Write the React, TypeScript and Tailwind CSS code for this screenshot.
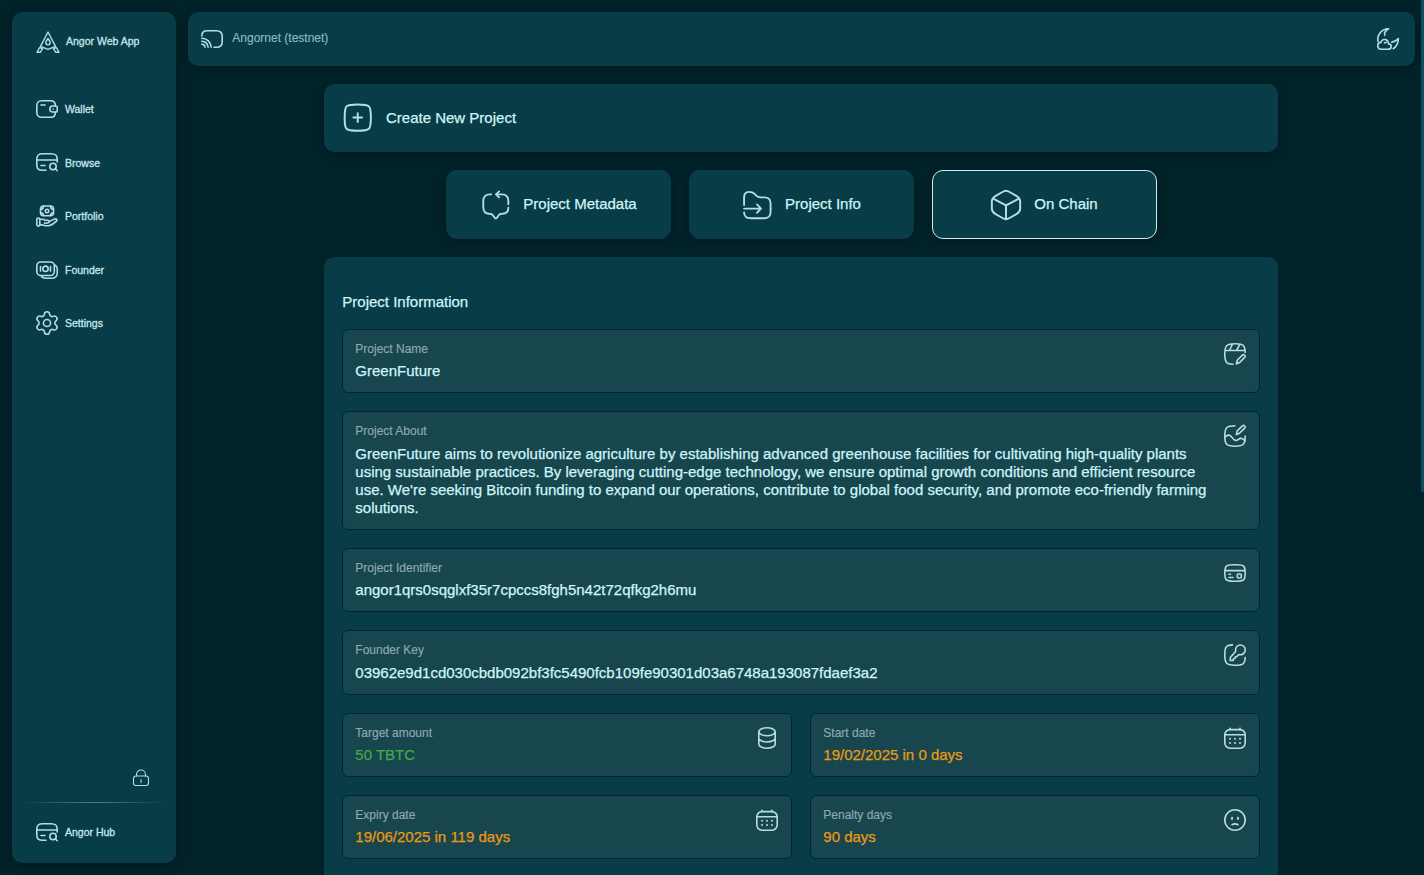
import type { ReactNode } from "react";

function Icon({ size = 24, stroke = 1.6, children }: { size?: number; stroke?: number; children: ReactNode }) {
  return (
    <svg
      width={size}
      height={size}
      viewBox="0 0 24 24"
      fill="none"
      stroke="currentColor"
      strokeWidth={stroke}
      strokeLinecap="round"
      strokeLinejoin="round"
      className="shrink-0 text-[#b5dde3]"
    >
      {children}
    </svg>
  );
}

const LogoIcon = () => (
  <Icon stroke={1.4}>
    <path d="M12 2 4.500 16.400 12 19.300l7.500-2.900L12 2Z" />
    <path d="M12 8.500c1.500 2 2.200 2.800 2.200 4.100a2.200 2.200 0 0 1-4.400 0c0-1.300.7-2.100 2.200-4.100Z" />
    <path d="M3.600 17.500 1 22.300h3.200l2.400-3.600-3-1.200ZM20.400 17.500l2.600 4.800h-3.200l-2.400-3.600 3-1.200Z" />
  </Icon>
);

const WalletIcon = () => (
  <Icon>
    <path d="M20.300 9V8.500c0-3.300-1.200-4.700-4.500-4.700H7C3.200 3.800 1.800 5 1.800 9v6c0 4 1.400 5.300 5.200 5.300h8.800c3.300 0 4.500-1.400 4.500-4.700V15" />
    <path d="M21 9h-3.200a3 3 0 0 0 0 6H21c.7 0 1.200-.4 1.200-1.100v-3.800C22.200 9.400 21.700 9 21 9Z" />
    <path d="M6 8h4M18.200 12h.01" />
  </Icon>
);

const CardSearchIcon = () => (
  <Icon>
    <path d="M11 20.300H8C3.500 20.300 1.800 19 1.800 15V9.200C1.800 5.200 3.500 3.800 8 3.800h8c4.500 0 6.200 1.400 6.200 5.400V12" />
    <path d="M2 10h20M6 15.500h4" />
    <circle cx="18" cy="16.500" r="3.200" />
    <path d="m20.300 18.800 1.900 1.900" />
  </Icon>
);

const HandMoneyIcon = () => (
  <Icon>
    <rect x="5.500" y="2" width="13" height="9.800" rx="3" />
    <circle cx="12" cy="7" r="1.700" />
    <path d="M5.700 5.200c1.600 0 2.700-1 2.900-2.900M18.300 5.200c-1.600 0-2.700-1-2.900-2.900M5.700 8.800c1.500 0 2.500.9 2.900 2.700M18.300 8.800c-1.500 0-2.500.9-2.900 2.700" />
    <path d="M3.200 14c1.200 0 1.600.5 1.600 1.500v5c0 1-.4 1.600-1.600 1.600-1 0-1.400-.5-1.400-1.600v-5c0-1 .4-1.500 1.400-1.500Z" />
    <path d="M5 15.300h2.200c1.200 0 1.900.3 2.800 1h2.600c2.200 0 2.300 2.400.1 2.600l-3.200.2M14.200 17.600l5-2.500c1.800-.8 3.600.5 2.200 2-2.500 2.600-4.800 4.100-7.500 4.600-3.500.6-5.500-.9-8.900-1.100" />
  </Icon>
);

const CashIcon = () => (
  <Icon>
    <rect x="1.800" y="4" width="17.500" height="13.500" rx="4" />
    <circle cx="10.500" cy="10.800" r="2.700" />
    <path d="M5.500 8.500v4.600M15.500 8.500v4.600M20.300 7.200c1.400.8 2 2 2 4.200v3c0 4.200-1.700 5.800-5.800 5.800H11c-2.300 0-3.700-.4-4.600-1.700" />
  </Icon>
);

const GearIcon = () => (
  <Icon>
    <g transform="translate(12 12) scale(1.120) translate(-12 -12)" strokeWidth="1.400">
      <path d="M9.671 4.136a2.340 2.340 0 0 1 4.659 0 2.340 2.340 0 0 0 3.319 1.915 2.340 2.340 0 0 1 2.330 4.033 2.340 2.340 0 0 0 0 3.831 2.340 2.340 0 0 1-2.330 4.033 2.340 2.340 0 0 0-3.319 1.915 2.340 2.340 0 0 1-4.659 0 2.340 2.340 0 0 0-3.320-1.915 2.340 2.340 0 0 1-2.330-4.033 2.340 2.340 0 0 0 0-3.831A2.340 2.340 0 0 1 6.350 6.051a2.340 2.340 0 0 0 3.319-1.915" />
      <circle cx="12" cy="12" r="3.200" />
    </g>
  </Icon>
);

const LockIcon = () => (
  <Icon stroke={1.1}>
    <rect x="4.500" y="10" width="15" height="9.500" rx="2.500" />
    <path d="M7.500 10V8.500a4.500 4.500 0 0 1 9 0V10M12 13.500v3" />
  </Icon>
);

const CastIcon = () => (
  <Icon>
    <path d="M1.800 9c0-3.700 1.500-5.200 5.700-5.200h8.800c4.300 0 5.900 1.500 5.900 5.500v5.400c0 4-1.600 5.500-5.900 5.500H14" />
    <path d="M1.800 11.200a9.500 9.500 0 0 1 9.400 9M1.800 14.200a6.300 6.300 0 0 1 6.300 6M1.800 17.200a3.200 3.200 0 0 1 3.200 3" />
  </Icon>
);

const MoonCloudIcon = () => (
  <Icon>
    <path d="M2 14.300C.9 8.500 5 1.900 12.600 1.800 9.500 3.500 8.200 5.800 8.700 8.200M22.400 11.500c-.2 4.800-2 8.300-5.200 10.200M22.400 11.500c-1.800 2.200-4 3.300-6.700 3.600" />
    <path d="M5 22.200h7.300c3.800 0 3.800-5.100.2-5.300.1-5-6.300-6-7.500-1.500-4.200 0-4.500 6.800 0 6.800Z" />
    <path d="M8.500 15.800c.6-.4 1.100-.5 1.800-.4" />
  </Icon>
);

const AddIcon = () => (
  <Icon size={34} stroke={1.400}>
    <path d="M2.600 11.700c0-4.400 0-6.600 1.300-7.900s3.500-1.400 7.900-1.400 6.500 0 7.900 1.400 1.400 3.500 1.400 7.900 0 6.500-1.400 7.900-3.500 1.400-7.900 1.400-6.500 0-7.900-1.400-1.300-3.500-1.300-7.900Z" />
    <path d="M11.800 8.600v6.200M8.700 11.700h6.200" />
  </Icon>
);

const MetadataIcon = () => (
  <Icon size={32} stroke={1.400}>
    <g transform="translate(0.600 0)">
      <path d="M8.500 4h-.8C4.200 4 2.600 5.600 2.600 9v4.500c0 3.500 1.500 5 4.600 5.100 1.500 0 2.300.4 2.900 1.400l.9 1.400c.6 1 1.400 1 2 0l.9-1.400c.6-1 1.500-1.400 2.900-1.400 3-.1 4.600-1.600 4.600-4.600M21.400 11.500V9c0-3.400-1.500-5-4.900-5h-4" />
      <path d="m14.500 1.800-2.400 2.200 2.400 2.300" />
    </g>
  </Icon>
);

const FolderIcon = () => (
  <Icon size={32} stroke={1.400}>
    <path d="M2.300 12V6.500c0-3 1.200-4.300 3.800-4.300 2 0 3 .4 4.100 1.500l1.200 1.300c1 1 1.800 1.300 3.300 1.300h2.800c3.400 0 4.700 1.500 4.700 4.600v6c0 3.700-1.300 5-5 5H7.400c-3.600 0-4.900-1.200-5.100-4.400" />
    <path d="M2.300 14.700h12.200M12 11.600l3 3.100-3 3.100" />
  </Icon>
);

const CubeIcon = () => (
  <Icon size={34} stroke={1.400}>
    <path d="M12 1.900c.8 0 1.500.3 2.800 1.100l4.500 2.500c2 1.200 2.700 1.900 2.700 4v5c0 2.100-.7 2.800-2.700 4L14.800 21c-1.300.8-2 1.100-2.800 1.100s-1.500-.3-2.800-1.100l-4.500-2.500c-2-1.200-2.700-1.900-2.700-4v-5c0-2.100.7-2.800 2.700-4L9.200 3c1.300-.8 2-1.100 2.800-1.100Z" />
    <path d="M3 7.500 12 12.300l9-4.800M12 12.300V22" />
  </Icon>
);

const NameIcon = () => (
  <Icon>
    <path d="M10 22.200C3.500 22.200 1.800 20.500 1.800 12S3.500 1.800 12 1.800s9.900 1.400 10.200 8.700M2 8.500h20M9.500 2 6.500 8.500M17 2l-3.500 6.500" />
    <path d="m13.400 22 .8-3.700 5.200-5.200c1.500-1.400 3.700.8 2.300 2.300l-5.200 5.200-3.100 1.400Z" />
  </Icon>
);

const AboutIcon = () => (
  <Icon>
    <path d="M12 1.800c-8.500 0-10.200 1.700-10.200 10.200S3.500 22.200 12 22.200 22.200 20.500 22.200 12" />
    <path d="m13.400 10.600.8-3.700 5.200-5c1.500-1.400 3.700.8 2.300 2.300l-5.200 5-3.100 1.400ZM2 13c3-3 5-2.200 7 .4 2.200 3.200 4 4 6.500 2 2.200-1.800 4.500-1.200 6.500 1.300" />
  </Icon>
);

const IdIcon = () => (
  <Icon>
    <path d="M1.800 12c0-6.800 1.200-8.200 8-8.200h4.400c6.800 0 8 1.400 8 8.200s-1.200 8.200-8 8.200H9.800c-6.800 0-8-1.400-8-8.200ZM2 9.600h20M6 13.200h1.500M6 16.500h4" />
    <rect x="14.300" y="13" width="4" height="4" rx="1" />
  </Icon>
);

const KeyIcon = () => (
  <Icon>
    <path d="M9.500 1.900C3 2.200 1.800 4 1.800 12c0 8.500 1.700 10.200 10.200 10.200 8 0 9.900-1.200 10.200-7.700" />
    <path d="M12.700 8.300a4.900 4.900 0 1 1 3.100 3.200l-2.100 2.100-1.400.2-.3 1.700-1.600.3-.3 1.700H7.300v-2.900l5.400-6.300Z" />
  </Icon>
);

const CoinsIcon = () => (
  <Icon>
    <ellipse cx="12" cy="5.800" rx="8.200" ry="4" />
    <path d="M3.800 5.800v12.400c0 2.200 3.700 4 8.200 4s8.200-1.800 8.200-4V5.800M3.800 12c0 2.200 3.700 4 8.200 4s8.200-1.800 8.200-4" />
  </Icon>
);

const CalendarIcon = () => (
  <Icon>
    <rect x="1.800" y="3.600" width="20.400" height="18.600" rx="5.200" />
    <path d="M2.300 8.800h19.400M7 2.200v1.400M17 2.200v1.400" />
    <path strokeWidth="2" d="M7 12.800h.01M12 12.800h.01M17 12.800h.01M7 17h.01M12 17h.01M17 17h.01" />
  </Icon>
);

const SadIcon = () => (
  <Icon>
    <circle cx="12" cy="12" r="10.200" />
    <path d="M9 16.700c1.700-1 4.300-1 6 0" />
    <path strokeWidth="1.900" d="M9 9.600v1.400M15 9.600v1.400" />
  </Icon>
);

const navItems = [
  { label: "Wallet", icon: <WalletIcon /> },
  { label: "Browse", icon: <CardSearchIcon /> },
  { label: "Portfolio", icon: <HandMoneyIcon /> },
  { label: "Founder", icon: <CashIcon /> },
  { label: "Settings", icon: <GearIcon /> },
];

function NavItem({ label, icon }: { label: string; icon: ReactNode }) {
  return (
    <a className="flex h-6 items-center gap-1.5">
      {icon}
      <span className="pt-[2px] text-[10.5px] [-webkit-text-stroke:0.3px]">{label}</span>
    </a>
  );
}

function Sidebar() {
  return (
    <aside className="flex h-[851px] w-[164px] shrink-0 flex-col rounded-[10px] bg-[#083c46] text-[#c6e6ea] shadow-[0_2px_8px_rgba(0,0,0,0.3)]">
      <div className="mt-[18px] flex h-6 items-center gap-1.5 pl-6">
        <LogoIcon />
        <span className="text-[10.5px] [-webkit-text-stroke:0.3px]">Angor Web App</span>
      </div>
      <nav className="mt-[42.8px] flex flex-col gap-[29.6px] pl-[23px]">
        {navItems.map((item) => (
          <NavItem key={item.label} {...item} />
        ))}
      </nav>
      <div className="mt-auto flex justify-end pr-[23px]">
        <LockIcon />
      </div>
      <div className="mx-2 mt-3 h-px bg-linear-to-r from-transparent via-[#4f8088] to-transparent" />
      <div className="mt-[17px] mb-[19px] pl-[23px]">
        <NavItem label="Angor Hub" icon={<CardSearchIcon />} />
      </div>
    </aside>
  );
}

function Tab({ label, icon, active, gap }: { label: string; icon: ReactNode; active?: boolean; gap: string }) {
  return (
    <button
      className={`flex h-[69px] w-[225px] items-center justify-center rounded-[11px] border bg-[#083c46] shadow-[0_2px_6px_rgba(0,0,0,0.3)] ${gap} ${
        active ? "border-[#cdeef0] pr-px" : "border-transparent"
      }`}
    >
      {icon}
      <span>{label}</span>
    </button>
  );
}

function Field({
  label,
  value,
  icon,
  height = "h-16",
  offset = "mt-[6px]",
  tone = "",
}: {
  label: string;
  value: string;
  icon: ReactNode;
  height?: string;
  offset?: string;
  tone?: string;
}) {
  return (
    <div className={`flex justify-between rounded-md border border-[#03252d] bg-[#17464f] pt-3 pr-3 pl-[12.3px] ${height}`}>
      <div className="w-[856px]">
        <div className="text-xs leading-[14px] text-[#8fa9b3] [-webkit-text-stroke:0.15px]">{label}</div>
        <div className={`leading-[18px] ${offset} ${tone}`}>{value}</div>
      </div>
      {icon}
    </div>
  );
}

export default function App() {
  return (
    <div className="relative flex h-[875px] w-[1424px] gap-3 overflow-hidden bg-[#02222a] pt-3 pl-3 font-['Liberation_Sans',Arial,sans-serif] text-[15px] text-[#d0f5f8] [-webkit-text-stroke:0.25px]">
      <Sidebar />
      <main className="flex w-[1227px] flex-col">
        <header className="flex h-[54px] shrink-0 items-center justify-between rounded-[10px] bg-[#083c46] px-3 pr-[15px] shadow-[0_2px_8px_rgba(0,0,0,0.3)]">
          <div className="flex items-center gap-2">
            <CastIcon />
            <span className="pb-[3px] pl-[0.3px] text-xs text-[#8fb9c0] [-webkit-text-stroke:0.15px]">
              Angornet (testnet)
            </span>
          </div>
          <MoonCloudIcon />
        </header>

        <div className="mt-[18px] ml-[136px] flex w-[954px] flex-col gap-[18px]">
          <section className="flex h-[68px] shrink-0 items-center gap-[11px] rounded-[10px] bg-[#083c46] pl-[17px] shadow-[0_2px_6px_rgba(0,0,0,0.3)]">
            <AddIcon />
            <h1>Create New Project</h1>
          </section>

          <div className="flex shrink-0 justify-center gap-[18px]">
            <Tab label="Project Metadata" icon={<MetadataIcon />} gap="gap-3" />
            <Tab label="Project Info" icon={<FolderIcon />} gap="gap-3" />
            <Tab label="On Chain" icon={<CubeIcon />} gap="gap-[11px]" active />
          </div>

          <section className="h-[640px] shrink-0 rounded-[10px] bg-[#083c46] px-[18px] pt-9">
            <h2 className="h-9 pl-[0.3px] leading-[18px]">Project Information</h2>
            <div className="flex flex-col gap-[18px]">
              <Field label="Project Name" value="GreenFuture" icon={<NameIcon />} />
              <Field
                label="Project About"
                value="GreenFuture aims to revolutionize agriculture by establishing advanced greenhouse facilities for cultivating high-quality plants using sustainable practices. By leveraging cutting-edge technology, we ensure optimal growth conditions and efficient resource use. We're seeking Bitcoin funding to expand our operations, contribute to global food security, and promote eco-friendly farming solutions."
                icon={<AboutIcon />}
                height="h-[119px]"
                offset="mt-[7px]"
              />
              <Field label="Project Identifier" value="angor1qrs0sqglxf35r7cpccs8fgh5n42t72qfkg2h6mu" icon={<IdIcon />} />
              <Field
                label="Founder Key"
                value="03962e9d1cd030cbdb092bf3fc5490fcb109fe90301d03a6748a193087fdaef3a2"
                icon={<KeyIcon />}
                height="h-[65px]"
                offset="mt-[7px]"
              />
              <div className="grid grid-cols-2 gap-[18px]">
                <Field label="Target amount" value="50 TBTC" icon={<CoinsIcon />} tone="text-[#43a84b]" />
                <Field label="Start date" value="19/02/2025 in 0 days" icon={<CalendarIcon />} tone="text-[#ea9a10]" />
                <Field label="Expiry date" value="19/06/2025 in 119 days" icon={<CalendarIcon />} tone="text-[#ea9a10]" />
                <Field label="Penalty days" value="90 days" icon={<SadIcon />} tone="text-[#ea9a10]" />
              </div>
            </div>
          </section>
        </div>
      </main>
      <div className="absolute top-0 right-0 h-[492px] w-[3px] rounded-b bg-[#0c4f5f]" />
    </div>
  );
}
